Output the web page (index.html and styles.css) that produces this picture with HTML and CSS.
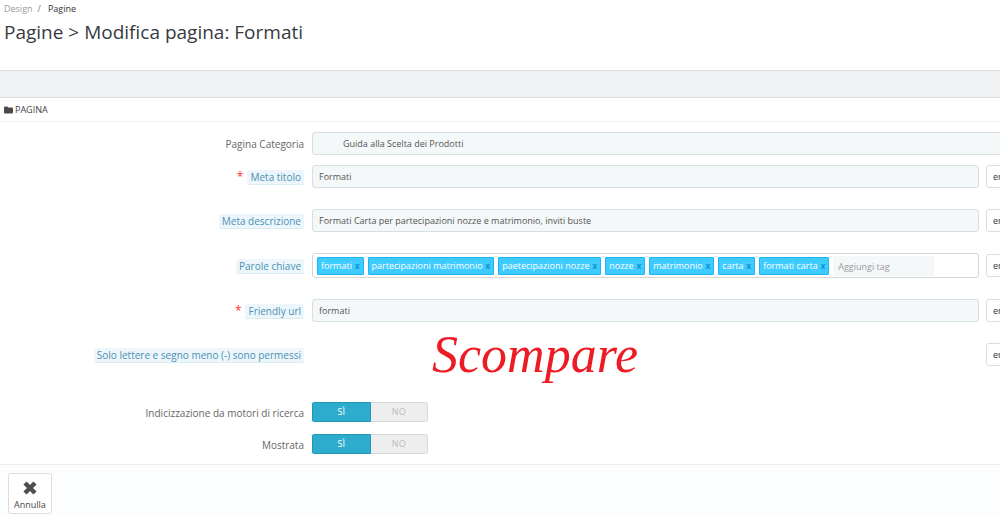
FILE: index.html
```html
<!DOCTYPE html>
<html lang="it">
<head>
<meta charset="utf-8">
<title>Pagine &gt; Modifica pagina: Formati</title>
<link rel="stylesheet" href="styles.css">
</head>
<body>
<header class="page-head">
  <nav class="breadcrumb"><a href="#" class="crumb">Design</a><span class="slash">/</span><a href="#" class="crumb crumb-current">Pagine</a></nav>
  <h1 class="title">Pagine &gt; Modifica pagina: Formati</h1>
</header>
<div class="band"></div>
<main class="panel">
  <h2 class="panel-heading">
    <svg class="folder" viewBox="0 0 20 16" aria-hidden="true"><path d="M0 2.5Q0 0 2.5 0H6.500Q9 0 9 2.500H17.500Q20 2.500 20 5V13.500Q20 16 17.500 16H2.500Q0 16 0 13.500Z"/></svg>
    <span>PAGINA</span>
  </h2>
  <form class="form">
    <div class="row">
      <label class="label" for="cat">Pagina Categoria</label>
      <select class="field wide" id="cat"><option>Guida alla Scelta dei Prodotti</option></select>
    </div>
    <div class="row row-spaced">
      <label class="label" for="meta-title"><span class="required">*</span><span class="hint">Meta titolo</span></label>
      <input class="field" id="meta-title" type="text" value="Formati">
      <button class="lang" type="button">en</button>
    </div>
    <div class="row row-spaced">
      <label class="label" for="meta-desc"><span class="hint">Meta descrizione</span></label>
      <input class="field" id="meta-desc" type="text" value="Formati Carta per partecipazioni nozze e matrimonio, inviti buste">
      <button class="lang" type="button">en</button>
    </div>
    <div class="row row-spaced">
      <label class="label" for="add-tag"><span class="hint">Parole chiave</span></label>
      <div class="tags">
        <span class="tag">formati<button class="remove" type="button">x</button></span>
        <span class="tag">partecipazioni matrimonio<button class="remove" type="button">x</button></span>
        <span class="tag">paetecipazioni nozze<button class="remove" type="button">x</button></span>
        <span class="tag">nozze<button class="remove" type="button">x</button></span>
        <span class="tag">matrimonio<button class="remove" type="button">x</button></span>
        <span class="tag">carta<button class="remove" type="button">x</button></span>
        <span class="tag">formati carta<button class="remove" type="button">x</button></span>
        <input class="add-tag" id="add-tag" type="text" placeholder="Aggiungi tag">
      </div>
      <button class="lang" type="button">en</button>
    </div>
    <div class="row row-spaced">
      <label class="label" for="url"><span class="required">*</span><span class="hint">Friendly url</span></label>
      <input class="field" id="url" type="text" value="formati">
      <button class="lang" type="button">en</button>
    </div>
    <div class="row row-note">
      <span class="label"><span class="hint">Solo lettere e segno meno (-) sono permessi</span></span>
      <div class="note-cell"><span class="note">Scompare</span></div>
      <button class="lang" type="button">en</button>
    </div>
    <div class="row row-switch" role="radiogroup" aria-labelledby="index-label">
      <span class="label" id="index-label">Indicizzazione da motori di ricerca</span>
      <div class="switch">
        <input type="radio" name="index" id="index-on" checked><label for="index-on">SÌ</label>
        <input type="radio" name="index" id="index-off"><label for="index-off">NO</label>
      </div>
    </div>
    <div class="row" role="radiogroup" aria-labelledby="shown-label">
      <span class="label" id="shown-label">Mostrata</span>
      <div class="switch">
        <input type="radio" name="shown" id="shown-on" checked><label for="shown-on">SÌ</label>
        <input type="radio" name="shown" id="shown-off"><label for="shown-off">NO</label>
      </div>
    </div>
  </form>
</main>
<footer class="panel-footer">
  <button class="cancel" type="button">
    <svg class="cross" viewBox="0 0 16 16" aria-hidden="true"><path d="M3 3L13 13M13 3L3 13"/></svg>
    <span>Annulla</span>
  </button>
</footer>
</body>
</html>
```
FILE: styles.css
```css
* { box-sizing: border-box; }
html { height: 100%; }
body {
  margin: 0;
  min-height: 100%;
  display: flex;
  flex-direction: column;
  overflow-x: hidden;
  background: #fff;
  color: #666;
  font: 10px/14px "Open Sans", "Noto Sans", sans-serif;
}
input, button, select { font: inherit; color: inherit; margin: 0; }
.page-head { height: 70px; padding: 2px 4px; }
.breadcrumb { display: flex; font-size: 9px; }
.crumb { color: #999; text-decoration: none; }
.crumb-current { color: #333; }
.slash { margin: 0 7px 0 5px; color: #6b8e23; }
.title { margin: 3px 0 0; color: #363a41; font-size: 19px; line-height: 26px; font-weight: 400; }
.band { height: 28px; background: #eff1f2; border: solid #dde1e3; border-width: 1px 0; }
.panel-heading {
  display: flex;
  align-items: center;
  gap: 2px;
  height: 24px;
  margin: 0;
  padding: 0 4px;
  border-bottom: 1px solid #f0f0f0;
  color: #444;
  font-size: 9px;
  font-weight: 400;
}
.folder { width: 9px; height: 8px; fill: #4a4a4a; }
.form { padding: 10px 0 0; margin-right: -32px; }
.row {
  display: grid;
  grid-template-columns: 304px 1fr 46px;
  column-gap: 7px;
  align-items: center;
  margin-bottom: 10px;
}
.row > :nth-child(2) { margin-left: 1px; }
.row-spaced { margin-bottom: 21px; }
.row-note { margin-bottom: 36px; }
.row-switch { margin-bottom: 12px; }
.label { display: flex; justify-content: flex-end; align-items: center; gap: 4px; padding-top: 1px; }
.hint { padding: 0 3px; background: #edf7fb; border-bottom: 1px solid #daedf5; border-radius: 2px; color: #4a8fb5; }
.required { color: #f33; font-size: 12px; }
.field {
  height: 23px;
  min-width: 0;
  padding: 0 6px;
  border: 1px solid #d3e0e5;
  border-radius: 3px;
  background: #f4f8f9;
  color: #555;
  font-size: 9px;
}
.wide { grid-column: 2 / 4; padding-left: 30px; appearance: none; }
.lang {
  height: 23px;
  padding: 0 6px;
  border: 1px solid #ddd;
  border-radius: 3px;
  background: #fff;
  color: #333;
  font-size: 9px;
  text-align: left;
}
.tags {
  display: flex;
  align-items: center;
  gap: 4px;
  height: 25px;
  padding: 0 4px;
  border: 1px solid #d6d6d6;
  border-radius: 3px;
}
.tag {
  display: flex;
  align-items: center;
  gap: 3px;
  height: 18px;
  padding: 0 3px;
  border: 1px solid #1fb5f5;
  border-radius: 1px;
  background: #3ecbff;
  color: #fff;
  font-size: 9px;
  white-space: nowrap;
}
.remove { padding: 0; border: 0; background: none; color: #1592cf; font-weight: 700; font-size: 8px; }
.add-tag { width: 101px; height: 20px; padding: 2px 5px 0; border: 0; background: #f4f8f9; font-size: 9px; }
.add-tag::placeholder { color: #999; }
.note-cell { position: relative; height: 23px; }
.note {
  position: absolute;
  left: 120px;
  top: -18px;
  color: #ed1c24;
  font: italic 52px/60px "Liberation Serif", serif;
}
.switch { display: flex; width: 116px; height: 20px; }
.switch input { position: absolute; opacity: 0; pointer-events: none; }
.switch label {
  flex: 1;
  border: 1px solid #d8d8d8;
  border-left: 0;
  border-radius: 0 2px 2px 0;
  background: #eee;
  color: #bbb;
  font-size: 9px;
  line-height: 18px;
  text-align: center;
}
.switch input:checked + label { border: 1px solid #2597b6; border-radius: 2px 0 0 2px; background: #2eacce; color: #fff; }
.panel-footer { flex: 1; padding: 8px; background: #fcfdfe; border-top: 1px solid #eee; }
.cancel {
  display: flex;
  flex-direction: column;
  align-items: center;
  gap: 2px;
  min-width: 43px;
  padding: 6px 5px 1px;
  border: 1px solid #ddd;
  border-radius: 3px;
  background: #fff;
  color: #444;
  font-size: 9px;
}
.cross { width: 16px; height: 16px; fill: none; stroke: #505050; stroke-width: 4.5; }
```
